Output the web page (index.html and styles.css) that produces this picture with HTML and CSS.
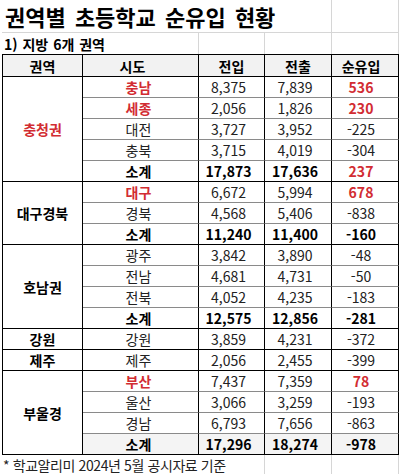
FILE: index.html
```html
<!DOCTYPE html>
<html lang="ko">
<head>
<meta charset="utf-8">
<link rel="stylesheet" href="styles.css">
</head>
<body>
<div class="sheet">
  <div class="c title span4 grid">권역별 초등학교 순유입 현황</div>
  <div class="c grid tb"></div>

  <div class="c sub span2 grid">1) 지방 6개 권역</div>
  <div class="c grid"></div>
  <div class="c grid"></div>
  <div class="c grid"></div>

  <div class="row head">
    <div class="c h first">권역</div>
    <div class="c h h2">시도</div>
    <div class="c h">전입</div>
    <div class="c h">전출</div>
    <div class="c h h5">순유입</div>
  </div>

  <div class="row">
    <div class="c grp first red b span5r">충청권</div>
    <div class="c name red b">충남</div><div class="c n3">8,375</div><div class="c n4">7,839</div><div class="c n5 red b">536</div>
  </div>
  <div class="row">
    <div class="c name red b">세종</div><div class="c n3">2,056</div><div class="c n4">1,826</div><div class="c n5 red b">230</div>
  </div>
  <div class="row">
    <div class="c name">대전</div><div class="c n3">3,727</div><div class="c n4">3,952</div><div class="c n5">-225</div>
  </div>
  <div class="row">
    <div class="c name">충북</div><div class="c n3">3,715</div><div class="c n4">4,019</div><div class="c n5">-304</div>
  </div>
  <div class="row end">
    <div class="c name b">소계</div><div class="c n3 b">17,873</div><div class="c n4 b">17,636</div><div class="c n5 red b">237</div>
  </div>

  <div class="row">
    <div class="c grp first b span3r">대구경북</div>
    <div class="c name red b">대구</div><div class="c n3">6,672</div><div class="c n4">5,994</div><div class="c n5 red b">678</div>
  </div>
  <div class="row">
    <div class="c name">경북</div><div class="c n3">4,568</div><div class="c n4">5,406</div><div class="c n5">-838</div>
  </div>
  <div class="row end">
    <div class="c name b">소계</div><div class="c n3 b">11,240</div><div class="c n4 b">11,400</div><div class="c n5 b">-160</div>
  </div>

  <div class="row">
    <div class="c grp first b span4r">호남권</div>
    <div class="c name">광주</div><div class="c n3">3,842</div><div class="c n4">3,890</div><div class="c n5">-48</div>
  </div>
  <div class="row">
    <div class="c name">전남</div><div class="c n3">4,681</div><div class="c n4">4,731</div><div class="c n5">-50</div>
  </div>
  <div class="row">
    <div class="c name">전북</div><div class="c n3">4,052</div><div class="c n4">4,235</div><div class="c n5">-183</div>
  </div>
  <div class="row end">
    <div class="c name b">소계</div><div class="c n3 b">12,575</div><div class="c n4 b">12,856</div><div class="c n5 b">-281</div>
  </div>

  <div class="row end">
    <div class="c grp first b">강원</div>
    <div class="c name">강원</div><div class="c n3">3,859</div><div class="c n4">4,231</div><div class="c n5">-372</div>
  </div>
  <div class="row end">
    <div class="c grp first b">제주</div>
    <div class="c name">제주</div><div class="c n3">2,056</div><div class="c n4">2,455</div><div class="c n5">-399</div>
  </div>

  <div class="row">
    <div class="c grp first b span4r">부울경</div>
    <div class="c name red b">부산</div><div class="c n3">7,437</div><div class="c n4">7,359</div><div class="c n5 red b">78</div>
  </div>
  <div class="row">
    <div class="c name">울산</div><div class="c n3">3,066</div><div class="c n4">3,259</div><div class="c n5">-193</div>
  </div>
  <div class="row">
    <div class="c name">경남</div><div class="c n3">6,793</div><div class="c n4">7,656</div><div class="c n5">-863</div>
  </div>
  <div class="row end last">
    <div class="c name b">소계</div><div class="c n3 b">17,296</div><div class="c n4 b">18,274</div><div class="c n5 b">-978</div>
  </div>

  <div class="c foot span3 grid">* 학교알리미 2024년 5월 공시자료 기준</div>
  <div class="c grid"></div>
  <div class="c grid"></div>
</div>
</body>
</html>
```

FILE: styles.css
```css
html, body {
  margin: 0;
  padding: 0;
  background: #ffffff;
}

body {
  font-family: "Noto Sans CJK KR", "Noto Sans", sans-serif;
  color: #111111;
  overflow: hidden;
}

.sheet {
  display: grid;
  grid-template-columns: 81px 116px 66px 67px 67px;
  grid-template-rows: 33px 21px 23px repeat(18, 21px) 19px;
  margin-left: 2px;
  width: 397px;
}

.row {
  display: contents;
}

.c {
  box-sizing: border-box;
  display: flex;
  align-items: center;
  justify-content: center;
  font-size: 14px;
  line-height: 1;
  white-space: nowrap;
  border-right: 1px solid #000000;
  border-bottom: 1px solid #8a8a8a;
}

.grid {
  border-right: 1px solid #d6d6d6;
  border-bottom: none;
}

.tb {
  border-bottom: 1px solid #d6d6d6;
}

.span2 { grid-column: span 2; }
.span3 { grid-column: span 3; }
.span4 { grid-column: span 4; }
.span3r { grid-row: span 3; }
.span4r { grid-row: span 4; }
.span5r { grid-row: span 5; }

.title {
  justify-content: flex-start;
  padding-left: 3px;
  font-size: 22px;
  font-weight: 700;
  word-spacing: 3px;
  color: #000000;
  border-bottom: 1px solid #d6d6d6;
}

.sub {
  justify-content: flex-start;
  padding-left: 2px;
  padding-top: 1px;
  font-size: 14px;
  font-weight: 700;
  word-spacing: 1px;
  color: #000000;
}

.foot {
  justify-content: flex-start;
  padding-left: 1px;
  padding-top: 1px;
  font-size: 14px;
  letter-spacing: -0.4px;
  color: #222222;
}

.h {
  background: #f2f2f2;
  font-weight: 700;
  color: #000000;
  border-top: 1px solid #000000;
  border-bottom: 1px solid #000000;
}

.h2 { padding-right: 16px; }
.h5 { padding-right: 8px; }

.first {
  border-left: 1px solid #000000;
}

.grp {
  border-bottom: 1px solid #000000;
  font-size: 14px;
}

.end > .c {
  border-bottom: 1px solid #000000;
}

.last > .c {
  background: #f4f4f4;
}

.name { padding-right: 4px; color: #222222; }
.n3 { padding-right: 6px; color: #222222; }
.n4 { padding-right: 6px; color: #222222; }
.n5 { padding-right: 8px; color: #222222; }

.b {
  font-weight: 700;
  color: #000000;
}

.red {
  color: #d22c32;
}
```
